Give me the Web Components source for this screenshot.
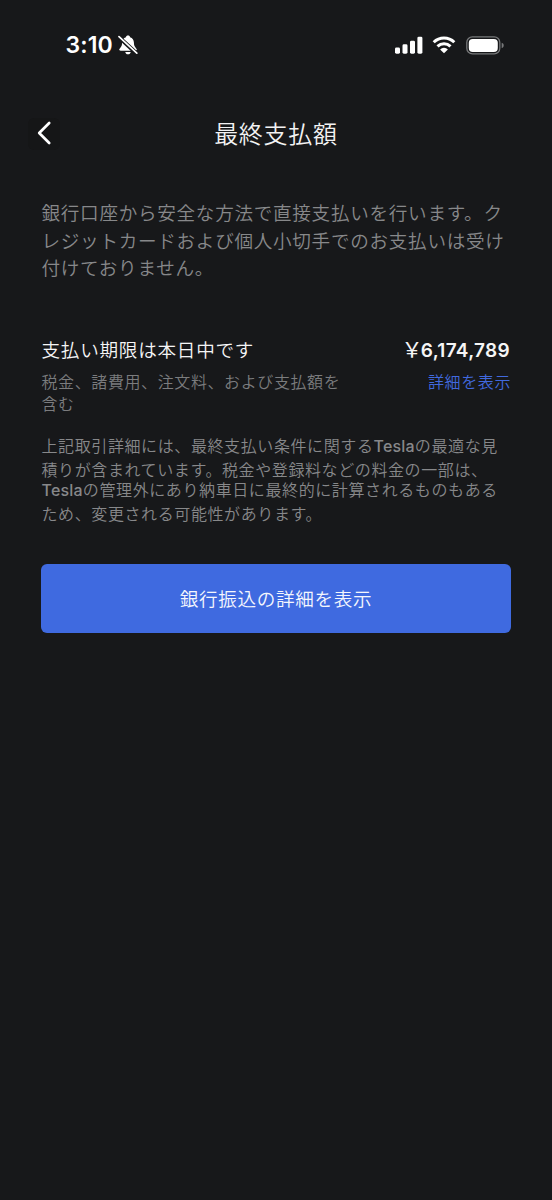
<!DOCTYPE html>
<html lang="ja">
<head>
<meta charset="utf-8">
<meta name="viewport" content="width=device-width, initial-scale=1">
<title>最終支払額</title>
<style>
    body {
        margin: 0;
        background: #17181a;
        color: #f2f2f3;
        font-family: Inter, "Noto Sans CJK JP", sans-serif;
        font-weight: 350;
    }
    b {
        font-weight: 550;
        letter-spacing: .2px;
    }
    .yen {
        font-size: 21px;
        line-height: 20px;
        font-weight: 400;
        margin-right: -2px;
    }
</style>
</head>
<body>
<payment-screen>
    <status-bar slot="status" time="3:10"></status-bar>
    <nav-bar slot="nav">最終支払額</nav-bar>

    <text-lines style="--size: 18.6px; --spacing: .7px; --line: 27.5px">
        <span>銀行口座から安全な方法で直接支払いを行います。ク</span>
        <span>レジットカードおよび個人小切手でのお支払いは受け</span>
        <span>付けておりません。</span>
    </text-lines>

    <amount-row>
        <span slot="title">支払い期限は本日中です</span>
        <span slot="amount"><span class="yen">￥</span>6,174,789</span>
        <span slot="note">税金、諸費用、注文料、および支払額を<br>含む</span>
        <span slot="link">詳細を表示</span>
    </amount-row>

    <text-lines style="--size: 16px; --spacing: .6px; --line: 24px; margin-top: 19px">
        <span>上記取引詳細には、最終支払い条件に関する<b>Tesla</b>の最適な見</span>
        <span>積りが含まれています。税金や登録料などの料金の一部は、</span>
        <span style="line-height: 16px"><b>Tesla</b>の管理外にあり納車日に最終的に計算されるものもある</span>
        <span style="line-height: 32px">ため、変更される可能性があります。</span>
    </text-lines>

    <primary-button>銀行振込の詳細を表示</primary-button>
</payment-screen>

<script>
class PaymentScreen extends HTMLElement {
    constructor() {
        super();
        this.attachShadow({ mode: 'open' });
    }

    connectedCallback() {
        this.shadowRoot.innerHTML = `
            <style>
                :host {
                    display: flex;
                    flex-direction: column;
                    box-sizing: border-box;
                    width: 552px;
                    height: 1200px;
                    overflow: hidden;
                    background: #17181a;
                }
                main {
                    display: flex;
                    flex-direction: column;
                    padding: 22px 41px 0;
                }
            </style>
            <slot name="status"></slot>
            <slot name="nav"></slot>
            <main><slot></slot></main>
        `;
    }
}

class StatusBar extends HTMLElement {
    constructor() {
        super();
        this.attachShadow({ mode: 'open' });
    }

    connectedCallback() {
        const time = this.getAttribute('time') || '';

        this.shadowRoot.innerHTML = `
            <style>
                :host {
                    display: flex;
                    align-items: center;
                    justify-content: space-between;
                    height: 90px;
                    padding: 0 48px 0 65.5px;
                    color: #fff;
                }
                div {
                    display: flex;
                    align-items: center;
                }
                .time {
                    font-size: 23px;
                    font-weight: 600;
                    line-height: 30px;
                    letter-spacing: .1px;
                }
                svg {
                    display: block;
                }
                .bell { margin-left: 5px; }
                .wifi { margin: 0 10px 0 9px; }
            </style>
            <div>
                <span class="time">${time}</span>
                <svg class="bell" width="20" height="20" viewBox="0 0 20 20">
                    <path d="M10 .5c-1.200 0-1.900.7-2.100 1.700C5.400 3 4.200 5 4.100 7.600c-.1 3.100-.6 4-1.900 5.300-.7.700-1 1.100-1 1.700 0 .7.600 1.100 1.400 1.100h14.800c.8 0 1.400-.4 1.400-1.100 0-.6-.3-1-1-1.700-1.300-1.300-1.800-2.200-1.900-5.300C15.800 5 14.600 3 12.100 2.200 11.900 1.200 11.200.5 10 .5zM7.300 16.900c.2 1.400 1.300 2.400 2.700 2.400s2.500-1 2.700-2.400z" fill="#fff"/>
                    <path d="M.5 1.700 18.800 18.700" stroke="#17181a" stroke-width="4.100"/>
                    <path d="M1 1.700 18.800 18.200" stroke="#fff" stroke-width="1.700" stroke-linecap="round"/>
                </svg>
            </div>
            <div>
                <svg width="28" height="18" viewBox="0 0 28 18" fill="#fff">
                    <rect x="0" y="11.500" width="5" height="6.200" rx="1.400"/>
                    <rect x="7.500" y="8.300" width="5" height="9.400" rx="1.400"/>
                    <rect x="15" y="4.700" width="5" height="13" rx="1.400"/>
                    <rect x="22.400" y=".7" width="5" height="17" rx="1.400"/>
                </svg>
                <svg class="wifi" width="24" height="18" viewBox="0 0 24 18">
                    <path d="M1.700 6.300a14.700 14.700 0 0 1 20.600 0M5.500 10.400a9.300 9.300 0 0 1 13 0" fill="none" stroke="#fff" stroke-width="3"/>
                    <path d="M12 17.300 8.100 13.400a5.600 5.600 0 0 1 7.800 0z" fill="#fff"/>
                </svg>
                <svg width="38" height="19" viewBox="0 0 38 19">
                    <rect x=".8" y=".9" width="33" height="17" rx="5.600" fill="none" stroke="#77787a" stroke-width="1.300"/>
                    <rect x="2.800" y="2.900" width="29" height="13" rx="3.900" fill="#fff"/>
                    <path d="M35.700 6.700c1.500.5 2 1.500 2 2.700s-.5 2.200-2 2.700z" fill="#77787a"/>
                </svg>
            </div>
        `;
    }
}

class NavBar extends HTMLElement {
    constructor() {
        super();
        this.attachShadow({ mode: 'open' });
    }

    connectedCallback() {
        this.shadowRoot.innerHTML = `
            <style>
                :host {
                    display: grid;
                    grid-template-columns: 32px 1fr 32px;
                    align-items: center;
                    height: 88px;
                    padding: 0 28px;
                }
                .back {
                    display: flex;
                    align-items: center;
                    justify-content: center;
                    height: 32px;
                    padding: 0 1px 2px 0;
                    box-sizing: border-box;
                    border-radius: 6px;
                    background: #151617;
                }
                h1 {
                    margin: 0;
                    padding-top: 1px;
                    font-size: 24px;
                    font-weight: inherit;
                    line-height: 36px;
                    letter-spacing: .75px;
                    text-align: center;
                }
            </style>
            <span class="back">
                <svg width="16" height="24" viewBox="0 0 16 24">
                    <path d="M13.200 2 3.200 12l10 10" fill="none" stroke="#fff" stroke-width="2.700" stroke-linecap="round" stroke-linejoin="round"/>
                </svg>
            </span>
            <h1><slot></slot></h1>
        `;
    }
}

class TextLines extends HTMLElement {
    constructor() {
        super();
        this.attachShadow({ mode: 'open' });
    }

    connectedCallback() {
        this.shadowRoot.innerHTML = `
            <style>
                :host {
                    display: flex;
                    flex-direction: column;
                    padding-left: .5px;
                    color: #87888a;
                    font-size: var(--size);
                    line-height: var(--line);
                    letter-spacing: var(--spacing);
                    white-space: nowrap;
                }
                ::slotted(span) {
                    display: block;
                }
            </style>
            <slot></slot>
        `;
    }
}

class AmountRow extends HTMLElement {
    constructor() {
        super();
        this.attachShadow({ mode: 'open' });
    }

    connectedCallback() {
        this.shadowRoot.innerHTML = `
            <style>
                :host {
                    display: flex;
                    flex-direction: column;
                    gap: 7px;
                    margin-top: 53px;
                    padding-left: .5px;
                    white-space: nowrap;
                }
                .row {
                    display: flex;
                    align-items: flex-start;
                    justify-content: space-between;
                }
                .head {
                    line-height: 28px;
                    font-size: 18.6px;
                    letter-spacing: .74px;
                    color: #f5f5f6;
                }
                .amount {
                    padding: 1px 1px 0 0;
                    margin-bottom: -1px;
                    font-size: 19px;
                    font-weight: 600;
                    letter-spacing: .3px;
                }
                .sub {
                    line-height: 22px;
                    font-size: 16px;
                    letter-spacing: .6px;
                    color: #7b7c7e;
                }
                .link {
                    color: #4169df;
                }
            </style>
            <div class="row head">
                <slot name="title"></slot>
                <span class="amount"><slot name="amount"></slot></span>
            </div>
            <div class="row sub">
                <slot name="note"></slot>
                <span class="link"><slot name="link"></slot></span>
            </div>
        `;
    }
}

class PrimaryButton extends HTMLElement {
    constructor() {
        super();
        this.attachShadow({ mode: 'open' });
    }

    connectedCallback() {
        this.shadowRoot.innerHTML = `
            <style>
                :host {
                    display: block;
                    margin-top: 34.5px;
                }
                button {
                    display: block;
                    width: 100%;
                    height: 69px;
                    padding: 0 0 2px;
                    border: 0;
                    border-radius: 6px;
                    background: #3f6ae0;
                    color: #f4f6fd;
                    font: inherit;
                    font-size: 18.6px;
                    letter-spacing: .67px;
                }
            </style>
            <button type="button"><slot></slot></button>
        `;
    }
}

customElements.define('payment-screen', PaymentScreen);
customElements.define('status-bar', StatusBar);
customElements.define('nav-bar', NavBar);
customElements.define('text-lines', TextLines);
customElements.define('amount-row', AmountRow);
customElements.define('primary-button', PrimaryButton);
</script>
</body>
</html>
